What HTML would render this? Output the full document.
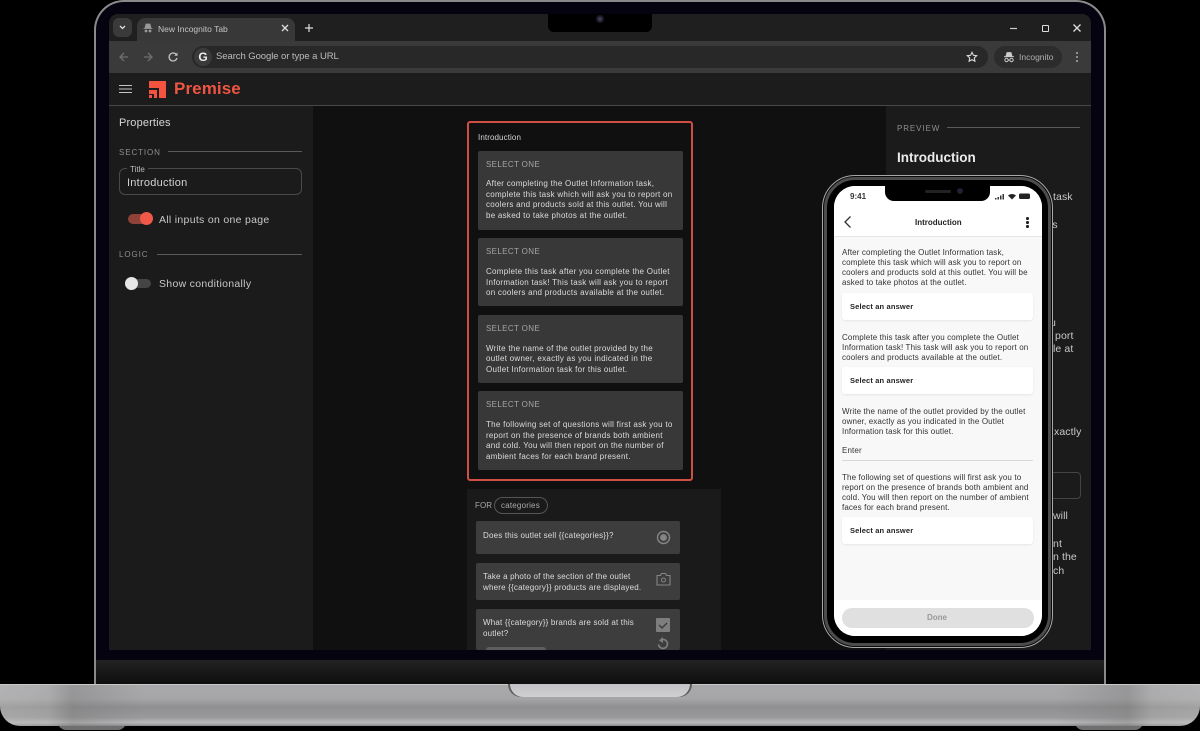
<!DOCTYPE html>
<html><head><meta charset="utf-8">
<style>
html,body{margin:0;padding:0;background:#000;}
#r{position:relative;width:1200px;height:731px;overflow:hidden;background:#000;font-family:"Liberation Sans",sans-serif;}
#r div,#r svg{position:absolute;}
.t{white-space:pre;filter:blur(.3px);}
.b{background:#383838;border-radius:2px;left:478px;width:205px;}
.sel{left:486px;font-size:8px;color:#a5a5a5;letter-spacing:.35px;line-height:10px;}
.q{left:486px;font-size:8px;color:#dcdcdc;line-height:10.500px;letter-spacing:.27px;}
.q2{letter-spacing:.19px;}
.p{left:842px;font-size:8px;color:#333;line-height:10px;letter-spacing:.13px;}
.a{left:842px;width:191px;height:27px;background:#fff;border-radius:3px;box-shadow:0 1px 2px rgba(0,0,0,.08);}
.an{left:850px;font-size:7.500px;font-weight:bold;color:#222;line-height:10px;letter-spacing:.15px;}
.lab{font-size:8px;color:#8e8e8e;letter-spacing:.9px;line-height:10px;}
.ln{height:1px;background:#5a5a5a;}
.f{font-size:10.500px;color:#c8c8c8;letter-spacing:.3px;line-height:14px;}
.e{font-size:10.500px;color:#c8c8c8;letter-spacing:.1px;line-height:14px;}
.i{background:#3d3d3d;border-radius:2px;left:476px;width:204px;}
</style></head><body>
<div id="r">
<!-- laptop lid -->
<div style="left:94px;top:0;width:1012px;height:690px;background:#05030f;border:2px solid #8a8a8a;border-bottom:0;border-radius:30px 30px 0 0;box-sizing:border-box;"></div>
<div style="left:96px;top:660px;width:1008px;height:24px;background:linear-gradient(#232323,#0e0e0e);"></div>
<!-- screen -->
<div style="left:109px;top:14px;width:982px;height:636px;background:#1b1b1b;border-radius:9px 9px 0 0;overflow:hidden;"></div>
<div style="left:109px;top:14px;width:982px;height:27px;background:#1f1f1f;border-radius:9px 9px 0 0;"></div>
<div style="left:113px;top:18px;width:19px;height:19px;background:#3a3a3a;border-radius:6px;"></div>
<svg style="left:119px;top:25px" width="7" height="5" viewBox="0 0 7 5"><path d="M1 1l2.500 2.500L6 1" fill="none" stroke="#ddd" stroke-width="1.300"/></svg>
<div style="left:137px;top:18px;width:158px;height:24px;background:#383838;border-radius:8px 8px 0 0;"></div>
<svg style="left:143px;top:23px" width="10" height="10" viewBox="0 0 10 10"><path d="M2 5l1-4h4l1 4zM0.500 5.500h9" fill="#999" stroke="#999" stroke-width=".8"/><circle cx="3" cy="8" r="1.400" fill="#999"/><circle cx="7" cy="8" r="1.400" fill="#999"/></svg>
<div class="t" style="left:158px;top:23px;font-size:8.500px;line-height:12px;color:#c4c4c4;">New Incognito Tab</div>
<svg style="left:281px;top:24px" width="8" height="8" viewBox="0 0 8 8"><path d="M1 1l6 6M7 1L1 7" stroke="#ddd" stroke-width="1.300"/></svg>
<svg style="left:304px;top:23px" width="10" height="10" viewBox="0 0 10 10"><path d="M5 1v8M1 5h8" stroke="#ddd" stroke-width="1.200"/></svg>
<svg style="left:1009px;top:27px" width="9" height="3" viewBox="0 0 9 3"><path d="M1 1.500h7" stroke="#ccc" stroke-width="1.200"/></svg>
<div style="left:1042px;top:25px;width:5px;height:5px;border:1.300px solid #ddd;border-radius:1px;"></div>
<svg style="left:1072px;top:23px" width="10" height="10" viewBox="0 0 10 10"><path d="M1.500 1.500l7 7M8.500 1.500l-7 7" stroke="#ddd" stroke-width="1.300"/></svg>
<!-- toolbar -->
<div style="left:109px;top:41px;width:982px;height:32px;background:#3a3a3a;"></div>
<svg style="left:118px;top:51px" width="12" height="12" viewBox="0 0 12 12"><path d="M10 6H2M6 2L2 6l4 4" fill="none" stroke="#6f6f6f" stroke-width="1.300"/></svg>
<svg style="left:142px;top:51px" width="12" height="12" viewBox="0 0 12 12"><path d="M2 6h8M6 2l4 4-4 4" fill="none" stroke="#6f6f6f" stroke-width="1.300"/></svg>
<svg style="left:167px;top:51px" width="12" height="12" viewBox="0 0 12 12"><path d="M9.600 4A4 4 0 1 0 10 7" fill="none" stroke="#c5c5c5" stroke-width="1.300"/><path d="M10.500 1.500v3.200H7.300z" fill="#c5c5c5"/></svg>
<div style="left:192px;top:46px;width:796px;height:22px;background:#282828;border-radius:11px;"></div>
<div style="left:194px;top:48px;width:18px;height:18px;background:#3a3a3a;border-radius:9px;"></div>
<div style="left:197px;top:50px;width:12px;height:14px;font-size:12px;line-height:14px;font-weight:bold;color:#eee;text-align:center;">G</div>
<div class="t" style="left:216px;top:50px;font-size:9.500px;line-height:14px;color:#bcbcbc;letter-spacing:-.07px;">Search Google or type a URL</div>
<svg style="left:966px;top:51px" width="12" height="12" viewBox="0 0 12 12"><path d="M6 1.300l1.400 3 3.300.4-2.400 2.200.6 3.300L6 8.600l-2.900 1.600.6-3.300L1.300 4.700l3.300-.4z" fill="none" stroke="#ddd" stroke-width="1.100"/></svg>
<div style="left:994px;top:46px;width:68px;height:22px;background:#2c2c2c;border-radius:11px;"></div>
<svg style="left:1003px;top:51px" width="12" height="12" viewBox="0 0 12 12"><path d="M3 5l1-3.500h4L9 5zM1 5.700h10" fill="#ccc" stroke="#ccc" stroke-width=".8"/><circle cx="3.500" cy="9" r="1.700" fill="none" stroke="#ccc"/><circle cx="8.500" cy="9" r="1.700" fill="none" stroke="#ccc"/><path d="M5 9h2" stroke="#ccc"/></svg>
<div class="t" style="left:1019px;top:51px;font-size:8.500px;line-height:12px;color:#b0b0b0;">Incognito</div>
<div style="left:1076px;top:52px;width:2px;height:2px;background:#aaa;box-shadow:0 4px 0 #aaa,0 8px 0 #aaa;border-radius:1px;"></div>
<!-- app header -->
<div style="left:109px;top:73px;width:982px;height:32px;background:#1c1c1c;"></div>
<div style="left:109px;top:105px;width:982px;height:1px;background:#484848;"></div>
<div style="left:119px;top:85px;width:13px;height:1px;background:#c4c4c4;box-shadow:0 3.500px 0 #c4c4c4,0 7px 0 #c4c4c4;"></div>
<svg style="left:149px;top:81px" width="17" height="17" viewBox="0 0 17 17"><path fill="#f4533f" d="M0 0h17v17h-7V7H0zM0 9h8v8H5v-4H0zM0 14h3v3H0z"/></svg>
<div class="t" style="left:174px;top:79px;font-size:17px;line-height:20px;font-weight:bold;color:#ee5543;letter-spacing:.1px;">Premise</div>
<!-- centre bg -->
<div style="left:313px;top:106px;width:573px;height:544px;background:#101010;"></div>
<!-- left panel -->
<div class="t" style="left:119px;top:116px;font-size:11px;line-height:14px;color:#d6d6d6;letter-spacing:.15px;">Properties</div>
<div class="t lab" style="left:119px;top:148px;">SECTION</div>
<div class="ln" style="left:168px;top:151px;width:134px;"></div>
<div style="left:119px;top:168px;width:183px;height:27px;box-sizing:border-box;border:1px solid #4a4a4a;border-radius:6px;"></div>
<div class="t" style="left:127px;top:165px;padding:0 3px;background:#1b1b1b;font-size:8px;line-height:10px;color:#bbb;height:7px;">Title</div>
<div class="t" style="left:127px;top:176px;font-size:11px;line-height:14px;color:#d2d2d2;letter-spacing:.25px;">Introduction</div>
<div style="left:128px;top:214px;width:24px;height:10px;background:#8e4238;border-radius:5px;"></div>
<div style="left:140px;top:212px;width:13px;height:13px;background:#f0584a;border-radius:50%;"></div>
<div class="t f" style="left:159px;top:213px;">All inputs on one page</div>
<div class="t lab" style="left:119px;top:250px;">LOGIC</div>
<div class="ln" style="left:157px;top:254px;width:145px;"></div>
<div style="left:128px;top:279px;width:23px;height:9px;background:#444;border-radius:5px;"></div>
<div style="left:125px;top:277px;width:13px;height:13px;background:#e6e6e6;border-radius:50%;"></div>
<div class="t f" style="left:159px;top:277px;">Show conditionally</div>
<!-- centre card -->
<div style="left:467px;top:121px;width:226px;height:360px;box-sizing:border-box;border:2px solid #cf4f44;border-radius:3px;background:#101010;"></div>
<div class="t" style="left:478px;top:133px;font-size:8px;line-height:10px;color:#d4d4d4;letter-spacing:.1px;">Introduction</div>
<div class="b" style="top:151px;height:79px;"></div>
<div class="t sel" style="top:160px;">SELECT ONE</div>
<div class="t q" style="top:179px;">After completing the Outlet Information task,
complete this task which will ask you to report on
coolers and products sold at this outlet. You will
be asked to take photos at the outlet.</div>
<div class="b" style="top:238px;height:68px;"></div>
<div class="t sel" style="top:247px;">SELECT ONE</div>
<div class="t q" style="top:267px;">Complete this task after you complete the Outlet
Information task! This task will ask you to report
on coolers and products available at the outlet.</div>
<div class="b" style="top:315px;height:68px;"></div>
<div class="t sel" style="top:324px;">SELECT ONE</div>
<div class="t q" style="top:343.500px;">Write the name of the outlet provided by the
outlet owner, exactly as you indicated in the
Outlet Information task for this outlet.</div>
<div class="b" style="top:391px;height:79px;"></div>
<div class="t sel" style="top:400px;">SELECT ONE</div>
<div class="t q" style="top:420px;">The following set of questions will first ask you to
report on the presence of brands both ambient
and cold. You will then report on the number of
ambient faces for each brand present.</div>
<!-- FOR block -->
<div style="left:467px;top:489px;width:254px;height:161px;background:#1a1a1a;"></div>
<div class="t" style="left:475px;top:501px;font-size:8px;line-height:10px;color:#a8a8a8;letter-spacing:.1px;">FOR</div>
<div style="left:494px;top:497px;width:54px;height:17px;box-sizing:border-box;border:1px solid #555;border-radius:9px;"></div>
<div class="t" style="left:501px;top:501px;font-size:8px;line-height:10px;color:#aaa;letter-spacing:.2px;">categories</div>
<div class="i" style="top:521px;height:33px;"></div>
<div class="t q q2" style="left:483px;top:531px;">Does this outlet sell {{categories}}?</div>
<svg style="left:656px;top:530px" width="15" height="15" viewBox="0 0 15 15"><circle cx="7.500" cy="7.500" r="6" fill="none" stroke="#858585" stroke-width="1.400"/><circle cx="7.500" cy="7.500" r="3.400" fill="#858585"/></svg>
<div class="i" style="top:563px;height:37px;"></div>
<div class="t q q2" style="left:483px;top:572px;">Take a photo of the section of the outlet
where {{category}} products are displayed.</div>
<svg style="left:656px;top:572px" width="15" height="14" viewBox="0 0 15 14"><path d="M1 3.500h3.500L5.500 1.500h4l1 2H14V13H1z" fill="none" stroke="#858585" stroke-width="1.100"/><circle cx="7.500" cy="8" r="2" fill="none" stroke="#858585"/></svg>
<div class="i" style="top:609px;height:41px;"></div>
<div class="t q q2" style="left:483px;top:618px;">What {{category}} brands are sold at this
outlet?</div>
<div style="left:486px;top:647px;width:60px;height:3px;background:#5e5e5e;border-radius:3px 3px 0 0;"></div>
<svg style="left:656px;top:618px" width="14" height="14" viewBox="0 0 14 14"><rect width="14" height="14" rx="1" fill="#7e7e7e"/><path d="M3 7l3 3 5-5" fill="none" stroke="#3d3d3d" stroke-width="1.500"/></svg>
<svg style="left:656px;top:637px" width="14" height="13" viewBox="0 0 14 13"><path d="M4 3.500a4.500 4.500 0 1 1-1.500 4" fill="none" stroke="#7e7e7e" stroke-width="1.600"/><path d="M7 0L3 3.500 7 6z" fill="#7e7e7e"/></svg>
<!-- right panel -->
<div style="left:886px;top:106px;width:205px;height:544px;background:#1b1b1b;"></div>
<div class="t lab" style="left:897px;top:124px;">PREVIEW</div>
<div class="ln" style="left:947px;top:127px;width:133px;"></div>
<div class="t" style="left:897px;top:149px;font-size:13.500px;line-height:17px;font-weight:bold;color:#ececec;">Introduction</div>
<div class="t e" style="left:1053px;top:190px;">task</div>
<div class="t e" style="left:1050px;top:218px;">is</div>
<div class="t e" style="left:1050px;top:316px;">u</div>
<div class="t e" style="left:1055px;top:329px;">port</div>
<div class="t e" style="left:1053px;top:342px;">le at</div>
<div class="t e" style="left:1054px;top:425px;">xactly</div>
<div style="left:1040px;top:472px;width:41px;height:27px;box-sizing:border-box;border:1px solid #444;border-radius:4px;"></div>
<div class="t e" style="left:1053px;top:509px;">will</div>
<div class="t e" style="left:1053px;top:537px;">nt</div>
<div class="t e" style="left:1053px;top:550px;">n the</div>
<div class="t e" style="left:1053px;top:564px;">ch</div>
<!-- camera notch -->
<div style="left:548px;top:14px;width:104px;height:18px;background:#000;border-radius:0 0 6px 6px;"></div>
<div style="left:596px;top:15px;width:8px;height:8px;background:#1c1c28;border-radius:50%;"></div>
<div style="left:598px;top:17px;width:4px;height:4px;background:#3a3a4a;border-radius:50%;"></div>
<!-- phone -->
<div style="left:822px;top:175px;width:231px;height:473px;box-sizing:border-box;background:#0a0a0a;border:1px solid #a8a8a8;border-radius:33px;"></div>
<div style="left:824px;top:177px;width:227px;height:469px;box-sizing:border-box;background:#000;border:3px solid #4c4c4c;border-radius:31px;"></div>
<div style="left:834px;top:186px;width:208px;height:450px;background:#f8f8f8;border-radius:21px;overflow:hidden;">
  <div style="left:0;top:0;width:208px;height:50px;background:#fff;border-bottom:1px solid #e6e6e6;"></div>
  <div style="left:0;top:414px;width:208px;height:36px;background:#fff;"></div>
</div>
<div style="left:885px;top:185px;width:105px;height:16px;background:#000;border-radius:0 0 9px 9px;"></div>
<div style="left:925px;top:190px;width:26px;height:3px;background:#222;border-radius:2px;"></div>
<div style="left:957px;top:188px;width:6px;height:6px;background:#1e2230;border-radius:50%;"></div>
<div class="t" style="left:850px;top:192px;font-size:8px;line-height:10px;font-weight:bold;color:#333;">9:41</div>
<svg style="left:995px;top:192px" width="35" height="8" viewBox="0 0 35 8"><path d="M0 6h1.500v1.500H0zM2.500 5H4v2.500H2.500zM5 3.500h1.500v4H5zM7.500 2H9v5.500H7.500z" fill="#333"/><path d="M13 3.500a6 6 0 0 1 8 0L17 7.500z" fill="#222"/><rect x="24" y="1.500" width="11" height="5.500" rx="1.500" fill="#222"/></svg>
<svg style="left:843px;top:215px" width="9" height="14" viewBox="0 0 9 14"><path d="M7.500 1.500L2 7l5.500 5.500" fill="none" stroke="#333" stroke-width="1.300"/></svg>
<div class="t" style="left:915px;top:218px;font-size:8px;line-height:10px;font-weight:bold;color:#222;">Introduction</div>
<div style="left:1026px;top:217px;width:2.500px;height:2.500px;background:#222;border-radius:50%;box-shadow:0 4px 0 #222,0 8px 0 #222;"></div>
<div class="t p" style="top:248px;">After completing the Outlet Information task,
complete this task which will ask you to report on
coolers and products sold at this outlet. You will be
asked to take photos at the outlet.</div>
<div class="a" style="top:293px;"></div><div class="t an" style="top:302px;">Select an answer</div>
<div class="t p" style="top:333px;">Complete this task after you complete the Outlet
Information task! This task will ask you to report on
coolers and products available at the outlet.</div>
<div class="a" style="top:367px;"></div><div class="t an" style="top:376px;">Select an answer</div>
<div class="t p" style="top:407px;">Write the name of the outlet provided by the outlet
owner, exactly as you indicated in the Outlet
Information task for this outlet.</div>
<div class="t p" style="top:446px;">Enter</div>
<div style="left:842px;top:460px;width:191px;height:1px;background:#d8d8d8;"></div>
<div class="t p" style="top:473px;">The following set of questions will first ask you to
report on the presence of brands both ambient and
cold. You will then report on the number of ambient
faces for each brand present.</div>
<div class="a" style="top:517px;"></div><div class="t an" style="top:526px;">Select an answer</div>
<div style="left:842px;top:608px;width:192px;height:20px;background:#e0e0e0;border-radius:10px;"></div>
<div class="t" style="left:927px;top:613px;font-size:8px;line-height:10px;font-weight:bold;color:#999;">Done</div>
<!-- base -->
<div style="left:58px;top:722px;width:68px;height:8px;background:#6f6f6f;border-radius:0 0 8px 8px;"></div>
<div style="left:1075px;top:722px;width:68px;height:8px;background:#6f6f6f;border-radius:0 0 8px 8px;"></div>
<div style="left:0;top:684px;width:1200px;height:42px;border-radius:0 0 20px 20px;background:linear-gradient(#a9a9ac 0,#a6a6a8 35%,#8f8f91 55%,#9a9a9c 80%,#b9b9bb 92%,#8a8a8c 100%);overflow:hidden;">
  <div style="left:0;top:0;width:1200px;height:42px;background:linear-gradient(90deg,#c4c4c4 0,#b5b5b5 4%,#777 6%,rgba(128,128,128,0) 12%,rgba(128,128,128,0) 88%,#777 94%,#b5b5b5 96%,#c4c4c4 100%);opacity:.35;"></div>
  <div style="left:0;top:0;width:1200px;height:1px;background:#c8c8c8;"></div>
</div>
<div style="left:508px;top:684px;width:184px;height:13px;background:#5a5a5a;border-radius:0 0 14px 14px;"></div>
<div style="left:510px;top:684px;width:180px;height:13px;background:linear-gradient(#c2c2c4,#d0d0d2);border-radius:0 0 13px 13px;"></div>
</div>
</body></html>
